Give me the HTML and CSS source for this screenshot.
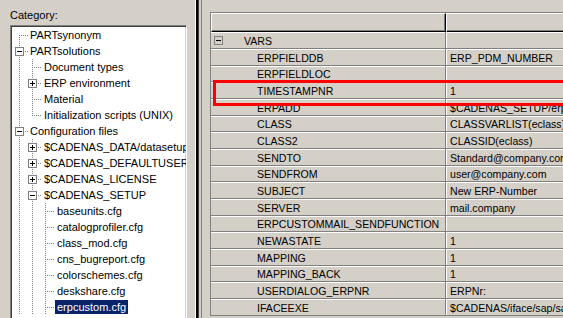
FILE: index.html
```html
<!DOCTYPE html>
<html lang="en">
<head>
  <meta charset="UTF-8" />
  <title>Category - erpcustom.cfg</title>
  <link rel="stylesheet" href="styles.css">
</head>
<body>
  <div class="window">
    <div class="left-pane">
      <div class="caption">Category:</div>
      <div class="tree" role="tree">
        <div class="node"><svg class="guides" width="16" height="16"><path class="dot" d="M7.5 8V16M9 8.5H16"/></svg><span class="label">PARTsynonym</span></div>
        <div class="node"><svg class="guides" width="16" height="16"><path class="dot" d="M7.5 0V16M13 8.5H16"/><rect class="box" x="3.5" y="4.5" width="8" height="8"/><path class="sign" d="M5 8.5H10"/></svg><span class="label">PARTsolutions</span></div>
        <div class="node"><svg class="guides" width="30" height="16"><path class="dot" d="M7.5 0V16M20.5 0V16M22 8.5H30"/></svg><span class="label">Document types</span></div>
        <div class="node"><svg class="guides" width="30" height="16"><path class="dot" d="M7.5 0V16M20.5 0V16M26 8.5H30"/><rect class="box" x="16.5" y="4.5" width="8" height="8"/><path class="sign" d="M18 8.5H23M20.5 6V11"/></svg><span class="label">ERP environment</span></div>
        <div class="node"><svg class="guides" width="30" height="16"><path class="dot" d="M7.5 0V16M20.5 0V16M22 8.5H30"/></svg><span class="label">Material</span></div>
        <div class="node"><svg class="guides" width="30" height="16"><path class="dot" d="M7.5 0V16M20.5 0V9M22 8.5H30"/></svg><span class="label">Initialization scripts (UNIX)</span></div>
        <div class="node"><svg class="guides" width="16" height="16"><path class="dot" d="M7.5 0V16M13 8.5H16"/><rect class="box" x="3.5" y="4.5" width="8" height="8"/><path class="sign" d="M5 8.5H10"/></svg><span class="label">Configuration files</span></div>
        <div class="node"><svg class="guides" width="30" height="16"><path class="dot" d="M7.5 0V16M20.5 0V16M26 8.5H30"/><rect class="box" x="16.5" y="4.5" width="8" height="8"/><path class="sign" d="M18 8.5H23M20.5 6V11"/></svg><span class="label">$CADENAS_DATA/datasetup</span></div>
        <div class="node"><svg class="guides" width="30" height="16"><path class="dot" d="M7.5 0V16M20.5 0V16M26 8.5H30"/><rect class="box" x="16.5" y="4.5" width="8" height="8"/><path class="sign" d="M18 8.5H23M20.5 6V11"/></svg><span class="label">$CADENAS_DEFAULTUSER</span></div>
        <div class="node"><svg class="guides" width="30" height="16"><path class="dot" d="M7.5 0V16M20.5 0V16M26 8.5H30"/><rect class="box" x="16.5" y="4.5" width="8" height="8"/><path class="sign" d="M18 8.5H23M20.5 6V11"/></svg><span class="label">$CADENAS_LICENSE</span></div>
        <div class="node"><svg class="guides" width="30" height="16"><path class="dot" d="M7.5 0V16M20.5 0V16M26 8.5H30"/><rect class="box" x="16.5" y="4.5" width="8" height="8"/><path class="sign" d="M18 8.5H23"/></svg><span class="label">$CADENAS_SETUP</span></div>
        <div class="node"><svg class="guides" width="43" height="16"><path class="dot" d="M7.5 0V16M20.5 0V16M33.5 0V16M35 8.5H43"/></svg><span class="label">baseunits.cfg</span></div>
        <div class="node"><svg class="guides" width="43" height="16"><path class="dot" d="M7.5 0V16M20.5 0V16M33.5 0V16M35 8.5H43"/></svg><span class="label">catalogprofiler.cfg</span></div>
        <div class="node"><svg class="guides" width="43" height="16"><path class="dot" d="M7.5 0V16M20.5 0V16M33.5 0V16M35 8.5H43"/></svg><span class="label">class_mod.cfg</span></div>
        <div class="node"><svg class="guides" width="43" height="16"><path class="dot" d="M7.5 0V16M20.5 0V16M33.5 0V16M35 8.5H43"/></svg><span class="label">cns_bugreport.cfg</span></div>
        <div class="node"><svg class="guides" width="43" height="16"><path class="dot" d="M7.5 0V16M20.5 0V16M33.5 0V16M35 8.5H43"/></svg><span class="label">colorschemes.cfg</span></div>
        <div class="node"><svg class="guides" width="43" height="16"><path class="dot" d="M7.5 0V16M20.5 0V16M33.5 0V16M35 8.5H43"/></svg><span class="label">deskshare.cfg</span></div>
        <div class="node"><svg class="guides" width="43" height="16"><path class="dot" d="M7.5 0V16M20.5 0V16M33.5 0V16M35 8.5H43"/></svg><span class="label selected">erpcustom.cfg</span></div>
      </div>
    </div>

    <div class="splitter"></div>

    <div class="right-pane">
      <div class="grid">
        <div class="grid-head">
          <div class="hcell name"></div>
          <div class="hcell value"></div>
        </div>
        <div class="grid-body">
          <div class="row group"><div class="cell name"><span class="toggle"></span>VARS</div><div class="cell value"></div></div>
          <div class="row"><div class="cell name">ERPFIELDDB</div><div class="cell value">ERP_PDM_NUMBER</div></div>
          <div class="row"><div class="cell name">ERPFIELDLOC</div><div class="cell value"></div></div>
          <div class="row marked"><div class="cell name">TIMESTAMPNR</div><div class="cell value">1</div></div>
          <div class="row"><div class="cell name">ERPADD</div><div class="cell value">$CADENAS_SETUP/erpcustom.cfg</div></div>
          <div class="row"><div class="cell name">CLASS</div><div class="cell value">CLASSVARLIST(eclass)</div></div>
          <div class="row"><div class="cell name">CLASS2</div><div class="cell value">CLASSID(eclass)</div></div>
          <div class="row"><div class="cell name">SENDTO</div><div class="cell value">Standard@company.com</div></div>
          <div class="row"><div class="cell name">SENDFROM</div><div class="cell value">user@company.com</div></div>
          <div class="row"><div class="cell name">SUBJECT</div><div class="cell value">New ERP-Number</div></div>
          <div class="row"><div class="cell name">SERVER</div><div class="cell value">mail.company</div></div>
          <div class="row"><div class="cell name">ERPCUSTOMMAIL_SENDFUNCTION</div><div class="cell value"></div></div>
          <div class="row"><div class="cell name">NEWASTATE</div><div class="cell value">1</div></div>
          <div class="row"><div class="cell name">MAPPING</div><div class="cell value">1</div></div>
          <div class="row"><div class="cell name">MAPPING_BACK</div><div class="cell value">1</div></div>
          <div class="row"><div class="cell name">USERDIALOG_ERPNR</div><div class="cell value">ERPNr:</div></div>
          <div class="row"><div class="cell name">IFACEEXE</div><div class="cell value">$CADENAS/iface/sap/sapexe</div></div>
        </div>
      </div>
    </div>
  </div>
</body>
</html>
```

FILE: styles.css
```css
* {
  box-sizing: border-box;
}
html, body {
  margin: 0;
  height: 100%;
  overflow: hidden;
}
body {
  background: #d4d0c8;
  color: #000;
  font-family: 'Liberation Sans', Arial, sans-serif;
  font-size: 11px;
}
.window {
  display: flex;
  height: 318px;
}

/* linke Seite: Kategorien */
.left-pane {
  flex: none;
  width: 195px;
  padding: 9px 0 0 10px;
}
.caption {
  line-height: 13px;
  margin-bottom: 3px;
}
.tree {
  width: 177px;
  height: 300px;
  padding: 1px 0 0 1px;
  background: #fff;
  border: 1px solid;
  border-color: #808080 #fff #fff #808080;
  box-shadow: inset 1px 1px #404040, inset -1px -1px #d4d0c8;
  overflow: hidden;
}
.node {
  display: flex;
  align-items: center;
  height: 16px;
  white-space: nowrap;
}
.guides {
  flex: none;
  shape-rendering: crispEdges;
}
.dot {
  fill: none;
  stroke: #808080;
  stroke-dasharray: 1 1;
}
.box {
  fill: #fff;
  stroke: #808080;
}
.sign {
  stroke: #000;
}
.label {
  padding: 0 2px;
  line-height: 14px;
}
.label.selected {
  background: #0a246a;
  color: #fff;
}

.splitter {
  flex: none;
  width: 4px;
  background: #000;
  border-left: 1px solid #fff;
  border-right: 1px solid #404040;
}

/* rechte Seite: Eigenschaften */
.right-pane {
  flex: 1;
  margin-left: 2px;
  padding: 12px 0 0 8px;
  border-left: 1px solid #808080;
  overflow: hidden;
}
.grid {
  width: 372px;
  border-top: 1px solid #808080;
  border-left: 1px solid #808080;
  font-size: 10.6px;
}
.grid-head {
  display: flex;
  height: 19px;
}
.hcell {
  border-top: 1px solid #fff;
  border-left: 1px solid #fff;
  border-right: 1px solid #000;
  border-bottom: 1px solid #000;
  box-shadow: inset -1px -1px #808080;
}
.hcell.name,
.cell.name {
  flex: none;
  width: 235px;
}
.hcell.value,
.cell.value {
  flex: 1;
}
.row {
  display: flex;
  height: 17px;
  border-bottom: 1px solid #808080;
}
.row:nth-child(3n) {
  height: 16px;
}
.cell {
  display: flex;
  align-items: center;
  padding-top: 1px;
  box-shadow: inset 0 1px #fff;
  white-space: nowrap;
  overflow: hidden;
}
.cell.name {
  padding-left: 46px;
  border-right: 1px solid #808080;
}
.cell.value {
  padding-left: 3px;
  border-left: 1px solid #fff;
}
.row.group .cell.name {
  padding-left: 3px;
}
.toggle {
  flex: none;
  display: flex;
  align-items: center;
  justify-content: center;
  width: 9px;
  height: 9px;
  margin-right: 21px;
  border: 1px solid #808080;
}
.toggle::before {
  content: '';
  width: 5px;
  height: 1px;
  background: #000;
}

/* rote Markierung */
.row.marked {
  position: relative;
}
.row.marked::after {
  content: '';
  position: absolute;
  left: 2px;
  top: -2px;
  width: 348px;
  height: 20px;
  border: 3px solid #f00;
}
```
